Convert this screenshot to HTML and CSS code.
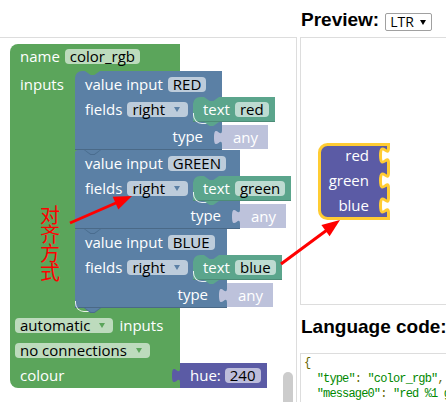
FILE: index.html
```html
<!DOCTYPE html>
<html>
<head>
<meta charset="utf-8">
<link rel="stylesheet" href="styles.css">
</head>
<body>
<div class="ws">
  <div class="def">
    <div class="g-row name-row"><span class="lbl">name</span><span class="fld">color_rgb</span></div>
    <div class="stmt">
      <div class="arm"><span class="lbl">inputs</span></div>
      <div class="stack">
        <div class="vin vin-red">
          <div class="b-r1"><span class="lbl">value input</span><span class="fld">RED</span></div>
          <div class="b-r2">
            <div class="b-arm"><span class="lbl">fields</span><span class="fld dd dd-blue">right<i class="arr"></i></span></div>
            <div class="txt"><span class="lbl">text</span><span class="fld">red</span></div>
          </div>
          <div class="b-r3"><div class="b-type"><span class="lbl">type</span></div><div class="any">any</div></div>
        </div>
        <div class="vin vin-green">
          <div class="b-r1"><span class="lbl">value input</span><span class="fld">GREEN</span></div>
          <div class="b-r2">
            <div class="b-arm"><span class="lbl">fields</span><span class="fld dd dd-blue">right<i class="arr"></i></span></div>
            <div class="txt"><span class="lbl">text</span><span class="fld">green</span></div>
          </div>
          <div class="b-r3"><div class="b-type"><span class="lbl">type</span></div><div class="any">any</div></div>
        </div>
        <div class="vin vin-blue">
          <div class="b-r1"><span class="lbl">value input</span><span class="fld">BLUE</span></div>
          <div class="b-r2">
            <div class="b-arm"><span class="lbl">fields</span><span class="fld dd dd-blue">right<i class="arr"></i></span></div>
            <div class="txt"><span class="lbl">text</span><span class="fld">blue</span></div>
          </div>
          <div class="b-r3"><div class="b-type"><span class="lbl">type</span></div><div class="any">any</div></div>
        </div>
      </div>
    </div>
    <div class="g-row gb1"><span class="fld dd dd-green lead">automatic<i class="arr"></i></span><span class="lbl">inputs</span></div>
    <div class="g-row"><span class="fld dd dd-green lead">no connections<i class="arr"></i></span></div>
    <div class="colour-row">
      <div class="colour-part"><span class="lbl">colour</span></div>
      <div class="hue"><span class="lbl">hue:</span><span class="fld">240</span></div>
    </div>
  </div>
  <div class="thumb"></div>
</div>

<div class="side">
  <div class="head">
    <h2 class="title">Preview:</h2>
    <div class="sel"><span>LTR</span><i class="sel-arr"></i></div>
  </div>
  <div class="pv">
    <div class="pblk">
      <svg class="pshape" width="72" height="77" viewBox="0 0 72 77">
        <path d="M1.5,9.5 A8,8 0 0 1 9.5,1.5 H70.5 V5 c0,10 -8,-8 -8,7.5 s8,-2.5 8,7.5 V30 c0,10 -8,-8 -8,7.5 s8,-2.5 8,7.5 V55 c0,10 -8,-8 -8,7.5 s8,-2.5 8,7.5 V75.5 H9.5 A8,8 0 0 1 1.5,67.5 Z" fill="#5b5ba5" stroke="#fc3" stroke-width="3"/>
      </svg>
      <div class="prow">red</div>
      <div class="prow">green</div>
      <div class="prow">blue</div>
    </div>
  </div>
  <h2 class="lang">Language code:</h2>
  <div class="code"><pre><span class="pun">{</span>
  "type"<span class="pun">:</span> "color_rgb"<span class="pun">,</span>
  "message0"<span class="pun">:</span> "red %1 green %2 blue %3"<span class="pun">,</span>
  "args0"<span class="pun">: [</span></pre></div>
</div>

<div class="note">对齐方式</div>
<svg class="arrows" width="446" height="402" viewBox="0 0 446 402">
  <line x1="70" y1="223" x2="117" y2="202.5" stroke="#f00" stroke-width="3"/>
  <polygon points="132,196 112.7,196.8 118.3,209.6" fill="#f00"/>
  <line x1="281" y1="264" x2="327" y2="230" stroke="#f00" stroke-width="3"/>
  <polygon points="340,220 321.4,225 329.6,236.2" fill="#f00"/>
</svg>
</body>
</html>
```

FILE: styles.css
```css
* { box-sizing: border-box; }
html, body { margin: 0; padding: 0; overflow: hidden; background: #fff; }
body {
  width: 446px; height: 402px;
  display: flex; align-items: flex-start;
  position: relative;
  font-family: "Open Sans", sans-serif;
}

/* ---------- workspace ---------- */
.ws {
  flex: none; width: 297px; height: 380px;
  margin-top: 37px;
  border-top: 1px solid #ddd; border-right: 1px solid #ddd;
  padding: 6px 0 0 10px;
  position: relative;
}
.thumb {
  position: absolute; left: 283px; top: 334px;
  width: 10px; height: 60px; border-radius: 5px; background: #ccc;
}

.def { display: flex; flex-direction: column; align-items: flex-start; color: #fff; font-size: 15px; }
.lbl { line-height: 15px; white-space: nowrap; }
.fld {
  display: inline-block; height: 15px; line-height: 15px;
  padding: 0 5px; border-radius: 4px;
  background: rgba(255,255,255,.6); color: #000; white-space: nowrap;
}
.lbl + .fld { margin-left: 5px; }
.fld + .lbl { margin-left: 6px; }
.lead { margin-left: -5px; }
.dd { padding-right: 8px; }
.arr {
  display: inline-block; width: 0; height: 0; vertical-align: middle;
  margin: -3px 0 0 9px;
  border-left: 3px solid transparent; border-right: 3px solid transparent;
  border-top: 5px solid #5b80a5;
}
.dd-green .arr { border-top-color: #5ba55b; }

.g-row {
  width: 170px; height: 25px; background: #5ba55b;
  display: flex; align-items: center; padding-left: 10px;
}
.name-row { height: 27px; padding-bottom: 2px; border-top-left-radius: 8px; position: relative; }
.name-row::after {
  content: ""; position: absolute; left: 75px; bottom: -4px; width: 15px; height: 4px;
  background: #5ba55b; clip-path: polygon(0 0, 100% 0, 62% 100%, 38% 100%); z-index: 3;
}
.stmt { display: flex; background: linear-gradient(to right, #5ba55b 73px, transparent 73px); }
.arm { width: 65px; padding: 3px 0 0 10px; }
.stack { display: flex; flex-direction: column; align-items: flex-start; }

.vin { position: relative; display: flex; flex-direction: column; align-items: flex-start; }
.vin::before {
  content: ""; position: absolute; left: 9px; bottom: -5px; width: 17px; height: 5px;
  background: #4a6c8e; clip-path: polygon(0 0, 100% 0, 62% 100%, 38% 100%); z-index: 3;
}
.vin::after {
  content: ""; position: absolute; left: 10px; bottom: -4px; width: 15px; height: 4px;
  background: #5b80a5; clip-path: polygon(0 0, 100% 0, 62% 100%, 38% 100%); z-index: 4;
}
.b-r1 {
  height: 26px; background: #5b80a5; position: relative;
  display: flex; align-items: center; padding-left: 10px;
  border-top-left-radius: 3px;
}
.vin-red .b-r1 { border-top-left-radius: 7px; }
.b-r1::after {
  content: ""; position: absolute; left: 129px; bottom: -4px; width: 15px; height: 4px;
  background: #5b80a5; clip-path: polygon(0 0, 100% 0, 62% 100%, 38% 100%); z-index: 3;
}
.b-r2 {
  height: 25px; display: flex;
  background: linear-gradient(to right, #5b80a5 126px, transparent 126px);
}
.b-arm { width: 118px; display: flex; align-items: center; padding-left: 10px; }
.b-r3 { height: 28px; display: flex; position: relative; }
.b-r3::before {
  content: ""; position: absolute; left: 118px; top: -9px; width: 13px; height: 10px;
  border-left: 1.5px solid rgba(255,255,255,.85); border-bottom: 1.5px solid rgba(255,255,255,.85);
  border-bottom-left-radius: 9px; z-index: 2;
}
.b-type {
  background: #5b80a5; display: flex; align-items: center; justify-content: flex-end;
  padding-right: 19px; box-shadow: inset 0 -1px 0 rgba(0,0,0,.18);
}
.vin-red .b-r1, .vin-red .b-type { width: 147px; }
.vin-green .b-r1, .vin-green .b-type { width: 165px; }
.vin-blue .b-r1, .vin-blue .b-type { width: 152px; }

.txt {
  height: 25px; background: #5ba58c; position: relative;
  display: flex; align-items: center; padding: 0 6px 0 10px;
  border-top-left-radius: 7px; box-shadow: inset 0 -1px 0 rgba(0,0,0,.15);
}
.txt::after {
  content: ""; position: absolute; left: 11px; bottom: -4px; width: 15px; height: 4px;
  background: #5ba58c; clip-path: polygon(0 0, 100% 0, 62% 100%, 38% 100%); z-index: 3;
}
.any {
  width: 46px; height: 24px; margin-top: 3px;
  background: #bdc2db; color: #fff; position: relative;
  display: flex; align-items: center; padding-left: 11px; line-height: 15px;
}
.any::before, .hue::before {
  content: ""; position: absolute; left: -8px; top: 5px; width: 9px; height: 15px;
  background: inherit;
  clip-path: path('M9 0 L8 0 C8 10 0 -8 0 7.5 C0 23 8 5 8 15 L9 15 Z');
}

.gb1 { height: 30px; padding-top: 5px; position: relative; }
.gb1::before {
  content: ""; position: absolute; left: 65px; top: -7px; width: 16px; height: 10px;
  border-left: 1.5px solid rgba(255,255,255,.85); border-bottom: 1.5px solid rgba(255,255,255,.85);
  border-bottom-left-radius: 9px; z-index: 2;
}
.colour-row { display: flex; }
.colour-part {
  width: 170px; height: 25px; background: #5ba55b;
  display: flex; align-items: center; padding-left: 10px;
  border-bottom-left-radius: 8px;
}
.hue {
  width: 87px; height: 25px; background: #5b5ba5; position: relative;
  display: flex; align-items: center; padding-left: 10px;
}
.hue .lbl + .fld { margin-left: 4px; }

/* ---------- right side ---------- */
.side { flex: none; width: 400px; margin-left: 3px; }
.head { height: 37px; display: flex; align-items: flex-start; padding: 9px 0 0 1px; }
.title { margin: 0; font: bold 19px/22px "Liberation Sans", Arial, sans-serif; color: #000; }
.sel {
  margin: 4px 0 0 6px; width: 47px; height: 18px;
  border: 1px solid #a0a0a0; border-radius: 2px;
  display: flex; align-items: center; justify-content: space-between;
  padding: 0 5px 0 4px;
  font: 14px/16px "Open Sans", sans-serif; color: #000;
}
.sel-arr {
  width: 0; height: 0;
  border-left: 3px solid transparent; border-right: 3px solid transparent;
  border-top: 5px solid #000;
}
.pv { height: 268px; border: 1px solid #ddd; }
.pblk { position: relative; width: 72px; height: 77px; margin: 105px 0 0 17px; }
.pshape { position: absolute; left: 0; top: 0; }
.prow {
  position: relative; height: 25px; line-height: 25px;
  text-align: right; padding-right: 21px;
  color: #fff; font-size: 15px; font-family: "Open Sans", sans-serif;
}
.lang { margin: 10px 0 0 1px; font: bold 19px/24px "Liberation Sans", Arial, sans-serif; color: #000; white-space: nowrap; }
.code { margin-top: 14px; border: 1px solid #ddd; height: 70px; padding: 2px 3px; }
.code pre {
  margin: 0; font: 12px/15.5px "Liberation Mono", monospace;
  letter-spacing: -0.85px; color: #080;
}
.pun { color: #660; }

/* ---------- annotations ---------- */
.note {
  position: absolute; left: 40px; top: 205px; width: 20px;
  font: 20px/19px "Noto Sans CJK SC", sans-serif; color: #f00;
}
.arrows { position: absolute; left: 0; top: 0; pointer-events: none; }
```
